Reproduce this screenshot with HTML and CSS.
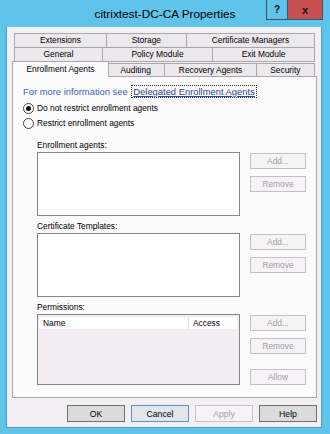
FILE: index.html
```html
<!DOCTYPE html>
<html lang="en">
<head>
    <meta charset="UTF-8">
    <meta name="viewport" content="width=device-width, initial-scale=1.0">
    <title>citrixtest-DC-CA Properties</title>
    <link rel="stylesheet" href="styles.css">
</head>
<body>
    <div class="window">
        <div class="titlebar">
            <div class="title">citrixtest-DC-CA Properties</div>
            <div class="controls">
                <button class="ctl help">?</button>
                <button class="ctl close">x</button>
            </div>
        </div>

        <div class="dialog">
            <div class="tabs">
                <div class="tab-row">
                    <div class="tab">Extensions</div>
                    <div class="tab">Storage</div>
                    <div class="tab">Certificate Managers</div>
                </div>
                <div class="tab-row">
                    <div class="tab">General</div>
                    <div class="tab">Policy Module</div>
                    <div class="tab">Exit Module</div>
                </div>
                <div class="tab-row front">
                    <div class="tab active">Enrollment Agents</div>
                    <div class="tab">Auditing</div>
                    <div class="tab">Recovery Agents</div>
                    <div class="tab">Security</div>
                </div>
            </div>

            <div class="panel">
                <p class="info">For more information see <a class="link">Delegated Enrollment Agents</a></p>

                <label class="radio"><span class="dot checked"></span>Do not restrict enrollment agents</label>
                <label class="radio"><span class="dot"></span>Restrict enrollment agents</label>

                <div class="group">
                    <div class="group-label">Enrollment agents:</div>
                    <div class="group-body">
                        <div class="listbox"></div>
                        <div class="side">
                            <button class="small" disabled>Add...</button>
                            <button class="small" disabled>Remove</button>
                        </div>
                    </div>
                </div>

                <div class="group">
                    <div class="group-label">Certificate Templates:</div>
                    <div class="group-body">
                        <div class="listbox"></div>
                        <div class="side">
                            <button class="small" disabled>Add...</button>
                            <button class="small" disabled>Remove</button>
                        </div>
                    </div>
                </div>

                <div class="group">
                    <div class="group-label">Permissions:</div>
                    <div class="group-body">
                        <div class="listview">
                            <div class="lv-head">
                                <div class="col-name">Name</div>
                                <div class="col-access">Access</div>
                            </div>
                        </div>
                        <div class="side">
                            <button class="small" disabled>Add...</button>
                            <button class="small" disabled>Remove</button>
                            <button class="small allow" disabled>Allow</button>
                        </div>
                    </div>
                </div>
            </div>

            <div class="footer">
                <button class="btn">OK</button>
                <button class="btn focus">Cancel</button>
                <button class="btn" disabled>Apply</button>
                <button class="btn">Help</button>
            </div>
        </div>
    </div>
</body>
</html>
```

FILE: styles.css
```css
* {
    box-sizing: border-box;
}

body {
    margin: 0;
    font-family: "Liberation Sans", Arial, sans-serif;
    font-size: 8.4px;
    color: #000;
    background: #5fc3ea;
}

.window {
    height: 434px;
    display: flex;
    flex-direction: column;
}

/* title bar */
.titlebar {
    height: 27px;
    display: grid;
    grid-template-columns: 57px 1fr 57px;
    padding: 0 7px;
}

.title {
    grid-column: 2;
    text-align: center;
    font-size: 11.8px;
    line-height: 25px;
    padding-top: 2px;
    white-space: nowrap;
}

.controls {
    display: flex;
    align-self: start;
}

.ctl {
    height: 20px;
    padding: 0;
    border: 1px solid #35566a;
    border-top: 0;
    font-family: "Liberation Sans", Arial, sans-serif;
    font-weight: bold;
    font-size: 10px;
    color: #111;
}

.help {
    width: 22px;
    background: #5fc3ea;
}

.close {
    width: 36px;
    margin-left: -1px;
    background: #c75050;
    font-size: 11px;
}

/* dialog body */
.dialog {
    flex: 1;
    margin: 0 8px 6px 6px;
    padding: 6px 4px 5px 5px;
    background: #f3f0f3;
    border: 1px solid #4a9dc3;
    border-top: 0;
    display: flex;
    flex-direction: column;
}

.tabs {
    margin: 0 2px;
}

.tab-row {
    display: flex;
}

.tab-row + .tab-row {
    margin-top: -1px;
}

.tab {
    flex: 1 1 auto;
    height: 15px;
    border: 1px solid #aaa7aa;
    background: #ece9ec;
    text-align: center;
    line-height: 13px;
    white-space: nowrap;
}

.tab + .tab {
    margin-left: -1px;
}

.tab-row.front {
    height: 16px;
    align-items: flex-start;
}

.front .tab {
    margin-top: 2px;
    height: 14px;
    border-bottom: 0;
}

.front .tab.active {
    position: relative;
    z-index: 1;
    margin: 0 -2px;
    height: 16px;
    line-height: 14px;
    background: #fcfbfc;
}

.panel {
    flex: 1;
    margin-top: -1px;
    padding: 9px 10px 0 10px;
    background: #fcfbfc;
    border: 1px solid #aaa7aa;
}

.info {
    margin: 0;
    font-size: 9.4px;
    line-height: 12px;
    color: #3d63b4;
    white-space: nowrap;
}

.link {
    margin-left: 2px;
    padding: 0 1px;
    color: #26489a;
    text-decoration: underline;
    outline: 1px dotted #333;
}

.radio {
    display: flex;
    align-items: center;
    gap: 3px;
    height: 12px;
    margin-top: 3px;
}

.info + .radio {
    margin-top: 4px;
}

.dot {
    width: 11px;
    height: 11px;
    border: 1px solid #454545;
    border-radius: 50%;
    background: #fff;
    display: grid;
    place-items: center;
}

.dot.checked::after {
    content: "";
    width: 5px;
    height: 5px;
    border-radius: 50%;
    background: #111;
}

.group {
    margin: 4px 0 0 14px;
}

.radio + .group {
    margin-top: 10px;
}

.group-label {
    line-height: 12px;
    margin-bottom: 1px;
}

.group-body {
    display: grid;
    grid-template-columns: 1fr 56px;
    column-gap: 10px;
}

.listbox {
    height: 64px;
    border: 1px solid #878587;
    background: #fff;
}

.listview {
    height: 71px;
    padding: 2px 2px 1px 1px;
    border: 1px solid #878587;
    background: #f1edf1;
}

.lv-head {
    display: flex;
    height: 12px;
    line-height: 12px;
}

.col-name {
    flex: 1;
    padding-left: 4px;
    background: #fff;
    border-right: 1px solid #e2dfe2;
}

.col-access {
    width: 48px;
    padding-left: 4px;
    background: #fff;
}

.side {
    display: flex;
    flex-direction: column;
    gap: 7px;
    padding-top: 1px;
}

.small {
    height: 16px;
    padding: 0;
    border: 1px solid #c3c1c3;
    background: #f5f3f5;
    color: #a2a0a2;
    font: inherit;
}

.small.allow {
    margin-top: 8px;
}

/* bottom buttons */
.footer {
    display: flex;
    justify-content: flex-end;
    gap: 6px;
    margin-top: 7px;
}

.btn {
    width: 58px;
    height: 17px;
    padding: 0;
    border: 1px solid #6f6f6f;
    background: #dcdcdc;
    font-family: inherit;
    font-size: 8.7px;
    color: #000;
}

.btn.focus {
    border-color: #5e8fc2;
    background: #e2e6eb;
}

.btn:disabled {
    border-color: #c5c3c5;
    background: #f5f3f5;
    color: #a5a3a5;
}
```
